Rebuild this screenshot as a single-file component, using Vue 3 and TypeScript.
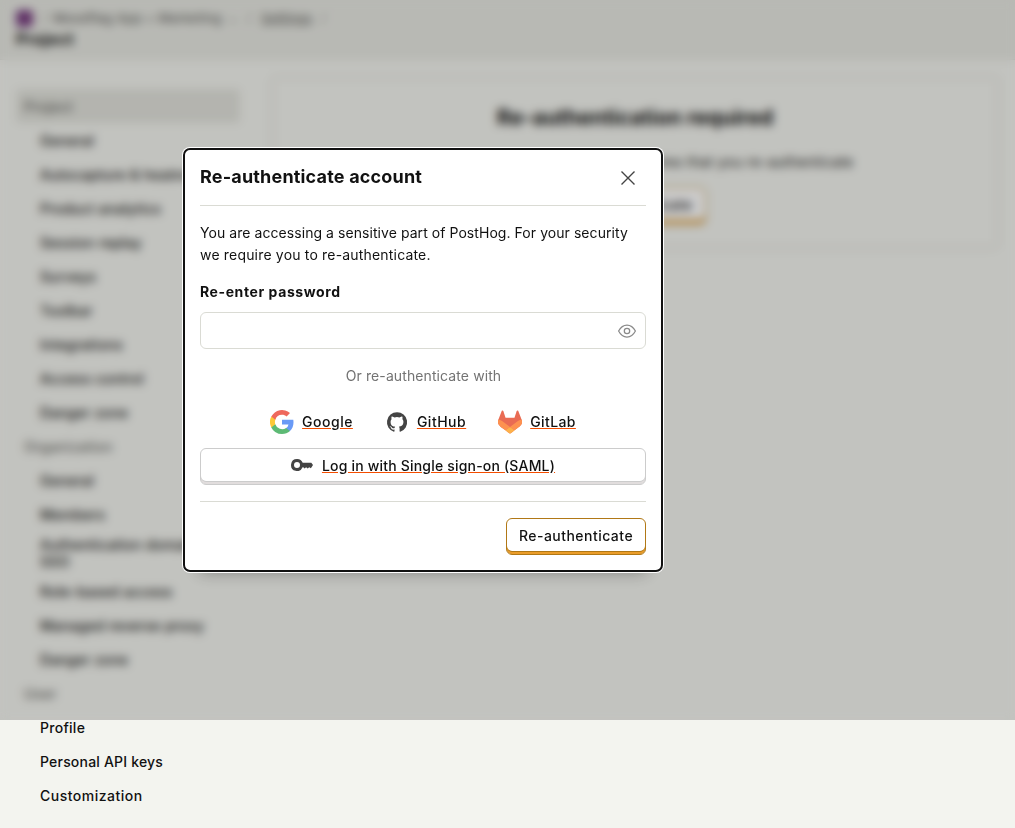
<script setup lang="ts">
interface NavItem {
  label: string
  kind: 'section' | 'item'
  active?: boolean
  modifier?: string
}

const section = (label: string, active = false): NavItem => ({ label, kind: 'section', active })
const item = (label: string, modifier = ''): NavItem => ({ label, kind: 'item', modifier })

const nav: NavItem[] = [
  section('Project', true),
  item('General'),
  item('Autocapture & heatmaps'),
  item('Product analytics'),
  item('Session replay'),
  item('Surveys'),
  item('Toolbar'),
  item('Integrations'),
  item('Access control'),
  item('Danger zone'),
  section('Organization'),
  item('General'),
  item('Members'),
  item('Authentication domains & SSO', 'tall'),
  item('Role-based access'),
  item('Managed reverse proxy'),
  item('Danger zone'),
  section('User'),
  item('Profile'),
  item('Personal API keys', 'snug'),
  item('Customization', 'wide'),
]
</script>

<template>
  <div class="page">
    <header class="topbar">
      <div class="crumbs">
        <span class="avatar"></span>
        <span class="sep first">/</span>
        <span class="crumb">Moodflag App + Marketing</span>
        <span class="sep second">⌄</span>
        <span class="sep third">/</span>
        <span class="crumb link">Settings</span>
        <span class="sep fourth">/</span>
      </div>
      <h1>Project</h1>
    </header>
    <div class="body">
      <nav class="sidebar">
        <div
          v-for="(n, i) in nav"
          :key="i"
          class="row"
          :class="[n.kind, n.modifier, { active: n.active }]"
        >
          <span>{{ n.label }}</span>
        </div>
      </nav>
      <main class="card">
        <h2>Re-authentication required</h2>
        <p>For your security, this section requires that you re-authenticate</p>
        <button class="btn primary">Re-authenticate</button>
      </main>
    </div>

    <div class="overlay">
      <section class="modal" role="dialog">
        <div class="modal-head">
          <h3>Re-authenticate account</h3>
          <svg class="close" viewBox="0 0 16 16" width="16" height="16">
            <path d="M1.5 1.5l13 13M14.5 1.5l-13 13" fill="none" stroke="#444" stroke-width="1.4" />
          </svg>
        </div>
        <div class="modal-body">
          <p class="intro">
            You are accessing a sensitive part of PostHog. For your security
            <span class="second-line">we require you to re-authenticate.</span>
          </p>
          <label class="label">Re-enter password</label>
          <div class="input">
            <svg viewBox="0 0 20 16" width="20" height="16" fill="none" stroke="#8a8a8a" stroke-width="1.25">
              <path d="M1.6 8C3.6 4.2 6.6 2 10 2s6.400 2.200 8.400 6c-2 3.800-5 6-8.400 6S3.600 11.800 1.600 8z" stroke-linejoin="round" />
              <circle cx="10" cy="8" r="2.700" />
            </svg>
          </div>
          <div class="or">Or re-authenticate with</div>
          <div class="social">
            <a class="provider">
              <svg class="logo" viewBox="0 0 24 24" width="24" height="24">
                <path fill="#699af6" d="M23.500 12.300c0-.900-.100-1.700-.200-2.500H12v4.700h6.500a5.600 5.600 0 0 1-2.400 3.600v3h3.900c2.300-2.100 3.500-5.200 3.500-8.800z" />
                <path fill="#5dba75" d="M12 24c3.200 0 6-1.100 8-2.900l-3.900-3a7.200 7.200 0 0 1-10.800-3.800h-4v3.100A12 12 0 0 0 12 24z" />
                <path fill="#fcc938" d="M5.300 14.300a7.200 7.200 0 0 1 0-4.600V6.600h-4a12 12 0 0 0 0 10.800z" />
                <path fill="#ee695d" d="M12 4.800c1.800 0 3.400.600 4.600 1.800L20 3.100A12 12 0 0 0 1.300 6.600l4 3.100A7.100 7.100 0 0 1 12 4.800z" />
              </svg>
              <span class="ul google">Google</span>
            </a>
            <a class="provider">
              <svg class="logo" viewBox="0 0 24 24" width="24" height="24">
                <path transform="translate(2 2) scale(.8333)" fill="#444" d="M12 .3a12 12 0 0 0-3.800 23.400c.600.100.800-.300.800-.600v-2c-3.300.700-4-1.600-4-1.600-.600-1.400-1.400-1.800-1.400-1.800-1-.700.100-.700.100-.700 1.200 0 1.900 1.200 1.900 1.200 1 1.800 2.800 1.300 3.500 1 0-.800.400-1.300.700-1.600-2.700-.300-5.500-1.300-5.500-6 0-1.200.500-2.300 1.300-3.100-.200-.400-.600-1.600 0-3.200 0 0 1-.300 3.400 1.200a11.500 11.500 0 0 1 6 0c2.300-1.500 3.300-1.200 3.300-1.200.700 1.600.200 2.800.100 3.200.800.800 1.300 1.900 1.300 3.200 0 4.600-2.800 5.600-5.500 5.900.500.400.900 1 .900 2.200v3.300c0 .300.100.700.800.600A12 12 0 0 0 12 .3z" />
              </svg>
              <span class="ul github">GitHub</span>
            </a>
            <a class="provider">
              <svg class="logo" viewBox="0 0 24 24" width="24" height="24">
                <path fill="#e96b53" d="M23.600 9.593l-.033-.086L20.300.980a.851.851 0 0 0-.336-.405.874.874 0 0 0-1 .054.875.875 0 0 0-.290.440L16.470 7.818H7.537L5.332 1.070a.857.857 0 0 0-.290-.441.874.874 0 0 0-1-.054.859.859 0 0 0-.336.405L.433 9.502l-.032.086a6.066 6.066 0 0 0 2.012 7.010l.011.008.030.022 4.976 3.726 2.462 1.863 1.500 1.132a1.009 1.009 0 0 0 1.220 0l1.499-1.132 2.461-1.863 5.006-3.750.013-.010a6.068 6.068 0 0 0 2.010-7.002z" />
                <path fill="#fd9150" d="M23.600 9.593l-.033-.086a11 11 0 0 0-4.380 1.970L12 16.900l4.570 3.450 5.006-3.750.013-.010a6.068 6.068 0 0 0 2.011-6.997z" />
                <path fill="#fd9150" d="M4.800 11.480A11 11 0 0 0 .433 9.502l-.032.086a6.066 6.066 0 0 0 2.012 7.010l.041.030 4.976 3.726L12 16.900z" />
                <path fill="#fdb14a" d="M7.430 20.354l2.462 1.863 1.500 1.132a1.009 1.009 0 0 0 1.220 0l1.499-1.132 2.461-1.863L12 16.900z" />
              </svg>
              <span class="ul gitlab">GitLab</span>
            </a>
          </div>
          <button class="btn saml">
            <svg viewBox="0 0 22 12" width="22" height="12">
              <path fill="#444" fill-rule="evenodd" d="M6 0a6 6 0 0 1 5.700 3.800H20.300L22 6l-2.100 3.200-1.700-.900-1.500 1.100-1.600-1.100-1.500 1.100L12.300 8.300H11.600A6 6 0 1 1 6 0zm0 3a3 3 0 1 0 0 6 3 3 0 0 0 0-6z" />
            </svg>
            <span class="ul">Log in with Single sign-on (SAML)</span>
          </button>
        </div>
        <footer class="modal-foot">
          <button class="btn primary">Re-authenticate</button>
        </footer>
      </section>
    </div>
  </div>
</template>

<style>
body {
  background: #f3f4ef;
}
</style>

<style scoped>
* {
  box-sizing: border-box;
}
.page {
  position: relative;
  width: 1015px;
  height: 828px;
  overflow: hidden;
  background: #f3f4ef;
  color: #111;
  font-family: Inter, 'Liberation Sans', sans-serif;
  font-size: 14px;
  line-height: 20px;
}
h1, h2, h3, p {
  margin: 0;
}
.topbar {
  height: 60px;
  padding: 8px 16px 0;
  background: #e7e8e2;
  border-bottom: 1px solid #e0e1da;
}
.crumbs {
  display: flex;
  align-items: center;
  height: 20px;
  font-size: 13px;
  font-weight: 500;
  letter-spacing: 0.1px;
  color: #6b6b68;
}
.avatar {
  width: 17px;
  height: 17px;
  border-radius: 3px;
  background: #783f80;
}
.sep {
  opacity: 0.6;
}
.first { margin: 0 6px 0 9px; }
.second { margin: 0 9px 0 6px; }
.third { margin: 0 9px 0 0; }
.fourth { margin-left: 9px; }
.link {
  text-decoration: underline;
}
h1 {
  font-size: 16px;
  line-height: 22px;
  font-weight: 700;
  letter-spacing: 0.35px;
}
.body {
  display: flex;
  align-items: flex-start;
}
.sidebar {
  width: 224px;
  margin: 29px 31px 0 16px;
}
.row {
  display: flex;
  align-items: center;
  height: 34px;
  padding: 0 24px;
  font-weight: 500;
  line-height: 17px;
  letter-spacing: 0.28px;
}
.row.tall {
  height: 43px;
  padding-right: 8px;
}
.row.snug {
  letter-spacing: 0.2px;
}
.row.wide {
  letter-spacing: 0.49px;
}
.row.section {
  padding: 0 8px;
  color: #686865;
}
.row.active {
  background: #e1e2db;
  border-radius: 4px;
}
.card {
  display: flex;
  flex-direction: column;
  align-items: center;
  width: 728px;
  height: 173px;
  margin-top: 16px;
  padding-top: 25px;
  border: 2px solid #dcddd6;
  border-radius: 6px;
}
h2 {
  font-size: 21px;
  line-height: 30px;
  font-weight: 700;
}
.card p {
  margin: 19px 0 15px;
  letter-spacing: 0.32px;
}
.btn {
  display: flex;
  align-items: center;
  justify-content: center;
  height: 37px;
  padding: 0 0 2px;
  border-radius: 6px;
  background: #fff;
  color: #111;
  font: 500 14px/20px Inter, 'Liberation Sans', sans-serif;
}
.primary {
  width: 140px;
  letter-spacing: 0.47px;
  border: 1px solid #b17816;
  box-shadow: inset 0 -2px 0 #eb9d2a, inset 0 -3px 0 #b17816;
}
.card .primary {
  width: 142px;
}
.overlay {
  position: absolute;
  inset: 0 0 auto;
  height: 720px;
  padding: 148px 0 0 183px;
  background: rgba(0, 0, 0, 0.2);
  backdrop-filter: blur(5px);
}
.modal {
  width: 480px;
  height: 424px;
  padding: 0 15px;
  background: #fff;
  border: 2px solid #111;
  border-radius: 7px;
  box-shadow: 0 0 0 1px #fff, 0 16px 16px -16px rgba(0, 0, 0, 0.35);
}
.modal-head {
  display: flex;
  align-items: center;
  justify-content: space-between;
  height: 56px;
  padding-right: 10px;
  border-bottom: 1px solid #dadbd4;
}
h3 {
  margin-top: -2px;
  font-size: 18px;
  line-height: 28px;
  font-weight: 700;
  letter-spacing: 0.18px;
}
.modal-body {
  height: 296px;
  padding-top: 16px;
  border-bottom: 1px solid #dadbd4;
}
.intro {
  line-height: 22px;
  letter-spacing: 0.06px;
}
.second-line {
  display: block;
  letter-spacing: 0.18px;
}
.label {
  display: block;
  margin: 16px 0 10px;
  line-height: 20px;
  font-weight: 700;
  letter-spacing: 0.59px;
}
.input {
  display: flex;
  align-items: center;
  justify-content: flex-end;
  height: 37px;
  padding-right: 8px;
  border: 1px solid #dadbd4;
  border-radius: 6px;
}
.or {
  margin-top: 17px;
  padding-left: 1px;
  text-align: center;
  letter-spacing: 0.1px;
  color: #737373;
}
.social {
  display: flex;
  justify-content: center;
  gap: 32px;
  height: 37px;
  margin-top: 17px;
}
.provider {
  display: flex;
  align-items: center;
  gap: 8px;
  font-weight: 500;
}
.google { letter-spacing: 0.5px; }
.github { letter-spacing: 0.5px; }
.gitlab { letter-spacing: 0.4px; }
.logo {
  display: block;
}
.ul {
  text-decoration: underline;
  text-decoration-color: #f54e00;
}
.saml {
  gap: 9px;
  width: 446px;
  margin-top: 8px;
  letter-spacing: 0.19px;
  border: 1px solid #ccc;
  box-shadow: inset 0 -2px 0 #e1dddd, inset 0 -3px 0 #ccc;
}
.saml svg {
  margin-top: -1px;
}
.modal-foot {
  display: flex;
  justify-content: flex-end;
  padding-top: 16px;
}
</style>
